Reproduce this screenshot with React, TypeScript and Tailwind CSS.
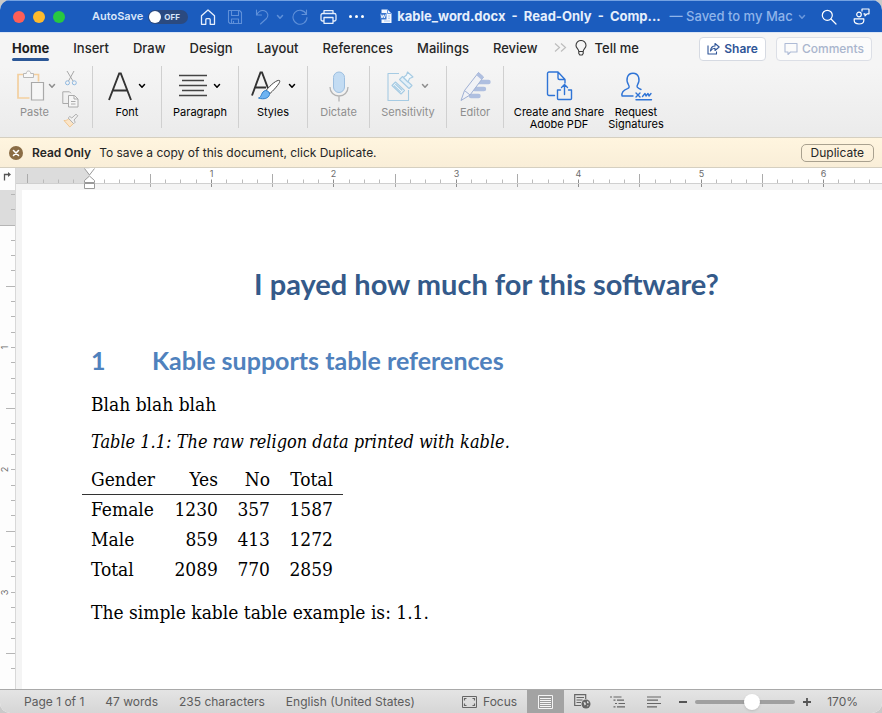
import React, { useEffect, useState } from "react";

type IconProps = { className?: string };

const Chevron = ({ className = "" }: IconProps) => (
  <svg className={`shrink-0 ${className}`} width="8" height="6" viewBox="0 0 8 6" fill="none" stroke="currentColor" strokeWidth="1.5" strokeLinecap="round" strokeLinejoin="round">
    <path d="M1.5 1.5 4 4.2l2.5-2.7" />
  </svg>
);

const HomeIcon = () => (
  <svg width="16" height="16" viewBox="0 0 16 16" fill="none" stroke="currentColor" strokeWidth="1.3" strokeLinejoin="round">
    <path d="M1.5 6.8 8 .9l6.5 5.9v8.5h-4.3v-4.6a1 1 0 0 0-1-1H6.8a1 1 0 0 0-1 1v4.6H1.5z" />
  </svg>
);

const SaveIcon = () => (
  <svg width="16" height="16" viewBox="0 0 16 16" fill="none" stroke="currentColor" strokeWidth="1.1" strokeLinejoin="round">
    <path d="M1.5 1.5h11l2 2v11H3l-1.5-1.5zM4.5 1.5v5h7v-5M4.5 14.5v-4.5h7v4.5M6.5 12v2.5" />
  </svg>
);

const UndoIcon = () => (
  <svg width="15" height="16" viewBox="0 0 15 16" fill="none" stroke="currentColor" strokeWidth="1.1" strokeLinecap="round">
    <path d="M1.500 1v5h5M1.700 5.800C3.500 2.500 6.500.8 9.500 1.800c3.500 1.200 4.300 5.200 2 7.700L5.500 15" />
  </svg>
);

const RedoIcon = () => (
  <svg width="16" height="16" viewBox="0 0 16 16" fill="none" stroke="currentColor" strokeWidth="1.1" strokeLinecap="round">
    <path d="M14.500 1v4.500H10M14.300 5.200A7 7 0 1 0 15 8.500" />
  </svg>
);

const PrintIcon = () => (
  <svg width="17" height="16" viewBox="0 0 17 16" fill="none" stroke="currentColor" strokeWidth="1.3" strokeLinejoin="round">
    <path d="M4 4.500V1.700h9v2.800M4 12H2.500a1.500 1.500 0 0 1-1.500-1.500V6.200a1.700 1.700 0 0 1 1.700-1.700h11.600A1.700 1.700 0 0 1 16 6.200v4.300a1.500 1.500 0 0 1-1.500 1.500H13M4 8.500h9v5.800H4z" />
  </svg>
);

const DocIcon = () => (
  <svg width="12" height="15" viewBox="0 0 12 15">
    <path d="M1.500.5h6L11.500 4.500v9.500h-10z" fill="#f4f8ff" />
    <path d="M7.500.5v4h4" fill="none" stroke="#6d9be0" />
    <path d="M8 7h2M8 9.200h2M4 12h6" stroke="#a9c6f0" />
    <rect y="4" width="6.500" height="6.500" fill="#3a76cf" />
    <path d="m1 5.500 1 3.500 1.200-3.200L4.400 9l1.100-3.500" fill="none" stroke="#fff" strokeWidth=".9" />
  </svg>
);

const SearchIcon = () => (
  <svg width="16" height="16" viewBox="0 0 16 16" fill="none" stroke="currentColor" strokeWidth="1.2" strokeLinecap="round">
    <circle cx="6.3" cy="6.3" r="5" />
    <path d="m10 10 5 5" />
  </svg>
);

const PresenceIcon = () => (
  <svg width="17" height="17" viewBox="0 0 17 17" fill="none" stroke="currentColor" strokeWidth="1.2" strokeLinejoin="round">
    <circle cx="6" cy="6.5" r="2.3" />
    <path d="M1.200 10.800h9.600v1.700c0 2.200-2 3.500-4.800 3.500s-4.800-1.300-4.800-3.500zM9 3.500V1h7v4.800h-2l-2 2V5.800h-1.500" />
  </svg>
);

const BulbIcon = () => (
  <svg width="12" height="16" viewBox="0 0 12 16" fill="none" stroke="#3a3a3a" strokeWidth="1.1" strokeLinejoin="round">
    <path d="M3.800 11.500C3.800 9 1 8.300 1 5.500a5 5 0 0 1 10 0c0 2.800-2.800 3.500-2.800 6zM3.800 11.500v2l1 1.500h2.400l1-1.500v-2" />
  </svg>
);

const ShareIcon = () => (
  <svg width="13" height="13" viewBox="0 0 13 13" fill="none" stroke="#2f5597" strokeWidth="1.1" strokeLinejoin="round">
    <path d="M1 3.500v8.500h8.500V9.500M3.500 9C3.800 5.800 5.500 4 8 4V1.500L12.200 5 8 8.500V6.300C6 6.300 4.700 7.200 3.500 9z" />
  </svg>
);

const CommentIcon = () => (
  <svg width="14" height="14" viewBox="0 0 14 14" fill="none" stroke="#aebbd6" strokeWidth="1.1" strokeLinejoin="round">
    <path d="M1 1.500h12v8.500H6.500L4 12.500V10H1z" />
  </svg>
);

const PasteIcon = () => (
  <svg width="30" height="32" viewBox="0 0 30 32" fill="none">
    <path d="M7.500 4.500H2v23.500h11.500M17 4.500h5.500v7" stroke="#f3cf9f" strokeWidth="1.7" />
    <path d="M7.500 7.500h10v-4h-2.800c0-1.500-.9-2.500-2.200-2.500s-2.200 1-2.200 2.500H7.500z" stroke="#b9b9b9" fill="#f8f8f8" />
    <path d="M15.500 12.500h12V30h-12z" stroke="#a9a9a9" strokeWidth="1.2" fill="#f6f6f6" />
  </svg>
);

const CutIcon = () => (
  <svg width="14" height="16" viewBox="0 0 14 16" fill="none">
    <path d="M3 1l6 10M10 1 4.500 11" stroke="#a8a8a8" />
    <circle cx="3.5" cy="12.8" r="2" stroke="#8fb8e0" />
    <circle cx="10.3" cy="12.8" r="2" stroke="#8fb8e0" />
  </svg>
);

const CopyIcon = () => (
  <svg width="17" height="17" viewBox="0 0 17 17" fill="none" stroke="#aaa">
    <path d="M6 12.500H.8V.8h6.700l1.500 1.500" />
    <path d="M6.500 4.500h6L16 8v8H6.500z" fill="#f6f6f6" />
    <path d="M12 4.500V8h4M9 10.500h4.500M9 13h4.500" />
  </svg>
);

const PainterIcon = () => (
  <svg width="16" height="15" viewBox="0 0 16 15" fill="none" strokeLinejoin="round">
    <path d="M1 7.500c2 .2 3.500-.5 4.700-1.800l4.800 4.800L6.800 14z" fill="#fbe5c8" stroke="#efc691" />
    <path d="m5.200 5 1.600-1.500 2 1.500L13 1.200l1.800 1.600L11 7l1.200 2.200-1.500 1.500z" stroke="#b0b0b0" fill="#f2f2f2" />
  </svg>
);

const FontIcon = () => (
  <svg width="24" height="29" viewBox="0 0 24 29" fill="none" stroke="#333" strokeWidth="1.9">
    <path d="M1 28 11.200 1.500h1.600L23 28M4.800 18.500h14.400" />
  </svg>
);

const ParagraphIcon = () => (
  <svg width="28" height="24" viewBox="0 0 28 24" stroke="#444" strokeWidth="1.3">
    <path d="M0 1.500h28M3 6.500h22M0 11.500h28M3 16.500h22M0 21.500h28" />
  </svg>
);

const StylesIcon = () => (
  <svg width="31" height="30" viewBox="0 0 31 30" fill="none">
    <path d="M1 24.500 9.500 1.500h1.500L18 20M4 16.500h11" stroke="#333" strokeWidth="1.9" />
    <path d="M15 19.500C20 13.500 26 8.500 28.500 9.500c1.500 1-3 7-9.500 13z" fill="#fff" stroke="#444" />
    <path d="M14.500 19.500c2.500 0 4.500 2 4 4-.7 3.500-5.500 5.500-11 3.500 3.500-.8 2.500-6.500 7-7.500z" fill="#6db3f2" stroke="#2f7fc9" />
  </svg>
);

const MicIcon = () => (
  <svg width="20" height="31" viewBox="0 0 20 31" fill="none">
    <path d="M1 16c0 5.500 3.800 9 9 9s9-3.500 9-9M10 25v5.500" stroke="#b3b3b3" strokeWidth="1.3" />
    <rect x="4.5" y="1" width="11" height="20.5" rx="5.5" fill="#c3dcf3" stroke="#9dbfe0" />
  </svg>
);

const SensitivityIcon = () => (
  <svg width="28" height="31" viewBox="0 0 28 31" fill="none" stroke="#a6cbe3" strokeWidth="1.1" strokeLinejoin="round">
    <path d="M12 2.500H1v27h20.500V19" />
    <path d="m5 14.500 3.500-3.500 9 8.500-3.500 3.500z" fill="#f3f8fb" />
    <path d="m6.800 14.500 7 6.700M8.300 13l7 6.500" />
    <path d="m12.500 8.500 3-3 9.500 9-3 3z" fill="#e3f0f8" />
    <path d="m16.500 6.500 3-2.500 1-3 5.500 5-3.500 1.500-1.500 3.500z" fill="#f3f8fb" />
  </svg>
);

const EditorIcon = () => (
  <svg width="31" height="31" viewBox="0 0 31 31" fill="none">
    <path d="M18.500 11H28.500M14.500 18h9.500M11 25h7.500" stroke="#afbfe0" strokeWidth="4.4" strokeLinecap="round" />
    <path d="M18.500 1.500 4.500 19.500 1 29.500l9-5.500L23.500 6z" fill="#f1f2f6" stroke="#9fb0d4" strokeLinejoin="round" />
    <path d="m18.500 1.500 5 4.500-2 2.700-5-4.500z" fill="#afbfe0" />
    <path d="m4.500 19.500 5.500 4.500" stroke="#9fb0d4" />
  </svg>
);

const PdfIcon = () => (
  <svg width="27" height="30" viewBox="0 0 27 30" fill="none" stroke="#2f74d6" strokeWidth="1.4" strokeLinejoin="round" strokeLinecap="round">
    <path d="M8.500 24.500H3A1.500 1.500 0 0 1 1.500 23V2.500A1.500 1.500 0 0 1 3 1h9l7 7.500v3.500M12 1v6a1.500 1.500 0 0 0 1.500 1.500h5.500M14.500 19H11.500v8.500a1 1 0 0 0 1 1h12a1 1 0 0 0 1-1V19h-3M18.500 23.500v-9.500M15.500 16.500l3-3 3 3" />
  </svg>
);

const SignIcon = () => (
  <svg width="33" height="29" viewBox="0 0 33 29" fill="none" stroke="#2f74d6" strokeWidth="1.4" strokeLinejoin="round" strokeLinecap="round">
    <path d="M13 24H2c-.8-4.500 2-6 5.500-7.300 2-.8 2-2.200 1-3.800C5.500 8 7 1.200 13 1.200S20.500 8 17.500 12.900c-1 1.600-.8 3 3.500 4.600M16 21l4 4M20 21l-4 4M22.500 24.500l2.500-3 1 2.500 2-2.500 1 2.500 2-2.500M16 27.800h15.500" />
  </svg>
);

const FocusIcon = () => (
  <svg width="15" height="12" viewBox="0 0 15 12" fill="none" stroke="#666">
    <path d="M.5.5h14v11H.5z" />
    <path d="M2.500 4.500v-2h2M10.500 2.500h2v2M12.500 7.500v2h-2M4.500 9.500h-2v-2" strokeWidth="1.2" />
  </svg>
);

const PrintLayoutIcon = () => (
  <svg width="15" height="14" viewBox="0 0 15 14">
    <path d="M.5.5h14v13H.5z" fill="#9a9a9a" stroke="#f5f5f5" />
    <path d="M2 3.500h11M2 5.500h11M2 7.500h11M2 9.500h11M2 11.500h11" stroke="#f5f5f5" />
  </svg>
);

const WebLayoutIcon = () => (
  <svg width="17" height="15" viewBox="0 0 17 15" fill="none">
    <path d="M7 11.500H.7V.7h11V5M2.500 3.500h7.500M2.500 6h6M2.500 8.500h4.500" stroke="#666" strokeWidth="1.2" />
    <circle cx="12" cy="10" r="4.5" fill="#666" />
    <path d="m9.500 8 2 .5.500 2-1.500 1zM13 7l1.800 1-.5 1.500-1.300-.5zM13 11.500l1.500-.5-.7 1.800z" fill="#ddd" />
  </svg>
);

const OutlineIcon = () => (
  <svg width="16" height="12" viewBox="0 0 16 12" stroke="#666" strokeWidth="1.2">
    <path d="M0 1h2M3.500 1h8M3.500 4.200h2M7 4.200h7M5 7.500h2M8.500 7.500H15M3.500 10.800h2M7 10.800h8" />
  </svg>
);

const DraftIcon = () => (
  <svg width="15" height="12" viewBox="0 0 15 12" stroke="#666" strokeWidth="1.2">
    <path d="M0 1h14M0 4.200h11M0 7.500h14M0 10.800h10" />
  </svg>
);

const INCH = 122.4;
const MARGIN_X = 73.5;
const MARGIN_Y = 35.5;

function useWindowSize() {
  const [size, setSize] = useState({ width: window.innerWidth, height: window.innerHeight });
  useEffect(() => {
    const update = () => setSize({ width: window.innerWidth, height: window.innerHeight });
    window.addEventListener("resize", update);
    return () => window.removeEventListener("resize", update);
  }, []);
  return size;
}

// Eighth-inch tick numbers that fit in a ruler of the given length.
function ticksFor(length: number, margin: number) {
  const first = -Math.floor((margin - 4) / (INCH / 8));
  const last = Math.floor((length - margin - 6) / (INCH / 8));
  return Array.from({ length: Math.max(0, last - first + 1) }, (_, n) => n + first);
}

function HorizontalRuler({ length }: { length: number }) {
  return (
    <div className="h-[22px] min-w-0 flex-1 overflow-hidden bg-[#f4f4f4]">
      <svg width="100%" height="22" className="block" stroke="#ababab">
        <rect width="100%" height="15" fill="#fff" stroke="none" />
        <rect width={MARGIN_X} height="15" fill="#dcdcdc" stroke="none" />
        <path d="M0 15.500H4000" stroke="#d0d0d0" />
        {ticksFor(length, MARGIN_X).map((t) => {
          const x = Math.round(MARGIN_X + (t * INCH) / 8) - 0.5;
          if (t === 0) return null;
          if (t % 8 === 0)
            return (
              <g key={t}>
                <path d={`M${x} 11.500V15M${x} 16v3`} stroke="#8f8f8f" />
                <text x={x} y="9" textAnchor="middle" stroke="none" fill="#6b6b6b" fontSize="9" fontFamily="Inter, sans-serif">
                  {t / 8}
                </text>
              </g>
            );
          if (t % 4 === 0) return <path key={t} d={`M${x} 6V15${t > 0 ? `M${x} 16v3` : ""}`} />;
          return <path key={t} d={`M${x} 11.500V15`} stroke="#bbb" />;
        })}
        <path d="M68.500.5h10L73.500 7z" fill="#fff" stroke="none" />
        <path d="m68.500.5 5 6.500 5-6.500" fill="none" stroke="#999" />
        <path d="M73.500 8l5 4.500v2h-10v-2zM68.500 15.500h10v5h-10z" fill="#fff" stroke="#999" />
      </svg>
    </div>
  );
}

function VerticalRuler({ length }: { length: number }) {
  return (
    <svg className="block h-full w-4 shrink-0 bg-[#fdfdfd]" stroke="#b5b5b5">
      <rect width="15" height={MARGIN_Y} fill="#dcdcdc" stroke="none" />
      <path d="M15.500 0V4000" stroke="#d8d8d8" />
      {ticksFor(length, MARGIN_Y).map((t) => {
        const y = Math.round(MARGIN_Y + (t * INCH) / 8) - 0.5;
        if (t === 0) return <path key={t} d={`M0 ${y}h15`} />;
        return (
          <g key={t}>
            <path d={t % 8 !== 0 && t % 4 === 0 ? `M6 ${y}h9` : `M11 ${y}h4`} />
            {t % 8 === 0 && (
              <text transform={`translate(8 ${y}) rotate(-90)`} textAnchor="middle" stroke="none" fill="#6b6b6b" fontSize="9" fontFamily="Inter, sans-serif">
                {t / 8}
              </text>
            )}
          </g>
        );
      })}
    </svg>
  );
}

function Group({ icon, label, width, menu, muted, last }: { icon: React.ReactNode; label: string; width: string; menu?: boolean; muted?: boolean; last?: boolean }) {
  return (
    <div className={`flex shrink-0 justify-center ${width} ${last ? "h-16" : "h-[62px] border-r border-[#d0d0d0]"}`}>
      <button type="button" className={`flex flex-col items-center text-[11px] leading-3 ${muted ? "text-[#8e8e8e]" : "text-black"}`}>
        <span className="flex h-10 items-center gap-1.5">
          {icon}
          {menu && <Chevron />}
        </span>
        <span className="whitespace-pre text-center">{label}</span>
      </button>
    </div>
  );
}

const tabs = ["Insert", "Draw", "Design", "Layout", "References", "Mailings", "Review"];

const rows = [
  ["Female", 1230, 357, 1587],
  ["Male", 859, 413, 1272],
  ["Total", 2089, 770, 2859],
];

export default function App() {
  const { width, height } = useWindowSize();
  return (
    <div className="h-screen bg-[#c9c9c9] font-['Inter','Liberation_Sans',sans-serif]">
      <div className="flex h-full flex-col overflow-hidden rounded-[10px] bg-white">
        <header className="flex h-8 shrink-0 items-center border-t border-[#74a2e2] bg-[#1b5cbe] pl-[13px] pr-3 text-white">
          <div className="flex gap-2">
            <button type="button" aria-label="Close" className="size-3 rounded-full bg-[#fe5f57]" />
            <button type="button" aria-label="Minimize" className="size-3 rounded-full bg-[#febb2e]" />
            <button type="button" aria-label="Zoom window" className="size-3 rounded-full bg-[#28c840]" />
          </div>
          <label className="ml-[27px] flex items-center gap-[5px] text-[11px] font-semibold text-[#d9e6fa]">
            AutoSave
            <input type="checkbox" role="switch" className="sr-only" />
            <span className="flex h-3.5 w-10 items-center gap-[3px] rounded-full bg-[#2b4a80] pl-px text-[8px] font-bold">
              <span className="size-3 rounded-full bg-white" />
              OFF
            </span>
          </label>
          <div className="ml-3 flex shrink-0 items-center text-[#e6effc]">
            <button type="button" aria-label="Home"><HomeIcon /></button>
            <button type="button" aria-label="Save" className="ml-[11px] text-[#5f90d9]"><SaveIcon /></button>
            <button type="button" aria-label="Undo" className="ml-3 flex items-center gap-1.5 text-[#5f90d9]">
              <UndoIcon />
              <Chevron />
            </button>
            <button type="button" aria-label="Redo" className="ml-2 text-[#5f90d9]"><RedoIcon /></button>
            <button type="button" aria-label="Print" className="ml-3"><PrintIcon /></button>
            <button type="button" aria-label="More" className="ml-3 flex gap-[3px]">
              <span className="size-[3px] rounded-full bg-white" />
              <span className="size-[3px] rounded-full bg-white" />
              <span className="size-[3px] rounded-full bg-white" />
            </button>
          </div>
          <h1 className="ml-4 flex min-w-0 flex-1 items-center gap-[5px] text-[13px]">
            <DocIcon />
            <span className="whitespace-pre font-bold text-[#e6effc]">{"kable_word.docx  -  Read-Only  -  Comp..."}</span>
            <span className="ml-1 whitespace-nowrap font-medium text-[#8fb4ea]">— Saved to my Mac</span>
            <Chevron className="text-[#6b98dc]" />
          </h1>
          <button type="button" aria-label="Search"><SearchIcon /></button>
          <button type="button" aria-label="Presence" className="ml-4"><PresenceIcon /></button>
        </header>

        <nav className="flex h-[34px] shrink-0 items-center border-t border-[#dbe5f5] bg-[#f5f5f5] pb-0.5 pl-3 pr-2.5 text-[13px] font-medium leading-4 text-[#262626]">
          <div className="flex items-center gap-6">
            <button type="button" className="pt-1 font-bold text-[#1d1d1d]">
              Home
              <span className="mt-0.5 block h-[3px] rounded-full bg-[#2b5797]" />
            </button>
            {tabs.map((t) => (
              <button key={t} type="button" className="mb-0.5">{t}</button>
            ))}
          </div>
          <button type="button" aria-label="More tabs" className="mb-0.5 ml-4 text-[#bdbdbd]">
            <svg width="13" height="9" viewBox="0 0 13 9" fill="none" stroke="currentColor" strokeWidth="1.2">
              <path d="m1 .5 4.500 4-4.500 4M7 .5l4.500 4-4.500 4" />
            </svg>
          </button>
          <button type="button" className="mb-0.5 ml-2 flex items-center gap-2">
            <BulbIcon />
            Tell me
          </button>
          <div className="ml-auto flex gap-2.5 text-xs font-semibold">
            <button type="button" className="flex h-6 items-center gap-1 rounded border border-[#d6dae2] bg-white px-[7px] text-[#2f5597]">
              <ShareIcon />
              Share
            </button>
            <button type="button" className="flex h-6 items-center gap-1 rounded border border-[#dcdfe6] bg-[#fbfbfb] px-[7px] font-medium text-[#a9b5cd]">
              <CommentIcon />
              Comments
            </button>
          </div>
        </nav>

        <section aria-label="Ribbon" className="flex h-[71px] shrink-0 bg-linear-to-b from-[#f5f5f5] to-[#ebebeb]">
          <div className="flex h-[62px] w-[93px] shrink-0 gap-1.5 border-r border-[#d0d0d0] pl-4">
            <button type="button" className="flex flex-col items-start text-[11px] leading-3 text-[#8e8e8e]">
              <span className="flex h-10 items-center gap-0.5">
                <PasteIcon />
                <Chevron />
              </span>
              <span className="pl-1">Paste</span>
            </button>
            <div className="flex flex-col items-center justify-between pt-1">
              <button type="button" aria-label="Cut"><CutIcon /></button>
              <button type="button" aria-label="Copy"><CopyIcon /></button>
              <button type="button" aria-label="Format painter"><PainterIcon /></button>
            </div>
          </div>
          <Group icon={<FontIcon />} label="Font" width="w-[69px]" menu />
          <Group icon={<ParagraphIcon />} label="Paragraph" width="w-[77px]" menu />
          <Group icon={<StylesIcon />} label="Styles" width="w-[69px]" menu />
          <Group icon={<MicIcon />} label="Dictate" width="w-[62px]" muted />
          <Group icon={<SensitivityIcon />} label="Sensitivity" width="w-[77px]" menu muted />
          <Group icon={<EditorIcon />} label="Editor" width="w-[57px]" muted />
          <Group icon={<PdfIcon />} label={"Create and Share\nAdobe PDF"} width="w-[110px]" last />
          <Group icon={<SignIcon />} label={"Request\nSignatures"} width="w-11" last />
        </section>

        <section aria-label="Read only notice" className="flex h-[31px] shrink-0 items-center border-y border-[#d5cfc0] bg-linear-to-b from-[#fff5df] to-[#f9eed8] pl-[9px] pr-2 text-xs text-[#262626]">
          <button type="button" aria-label="Dismiss">
            <svg width="14" height="14" viewBox="0 0 14 14">
              <circle cx="7" cy="7" r="7" fill="#8a6c45" />
              <path d="m4.500 4.500 5 5m0-5-5 5" stroke="#fff" strokeWidth="1.6" strokeLinecap="round" />
            </svg>
          </button>
          <strong className="ml-[9px] font-semibold">Read Only</strong>
          <span className="ml-2">To save a copy of this document, click Duplicate.</span>
          <button type="button" className="ml-auto flex h-[18px] items-center rounded-[5px] border border-[#a9a18f] px-[9px]">Duplicate</button>
        </section>

        <div className="flex shrink-0">
          <button type="button" aria-label="Tab stop" className="flex h-[22px] w-4 justify-center border-r border-[#d8d8d8] bg-[#fdfdfd] pt-[3px]">
            <svg width="9" height="10" viewBox="0 0 9 10" fill="none" stroke="#555">
              <path d="M1.500 9.500v-6h4.500" strokeWidth="1.3" />
              <path d="M5 1v5l3-2.500z" fill="#555" stroke="none" />
            </svg>
          </button>
          <HorizontalRuler length={width - 16} />
        </div>

        <div className="flex min-h-0 flex-1 bg-[#f4f4f4]">
          <VerticalRuler length={height - 214} />
          <main className="ml-1.5 min-w-0 flex-1 overflow-hidden bg-white pl-[69px] pt-[76px] font-['DejaVu_Serif_Condensed','DejaVu_Serif',serif] text-[19px] leading-7 text-black">
            <h1 className="text-center font-['Lato','Carlito',sans-serif] text-[29px] font-bold leading-9 text-[#345a8a]">I payed how much for this software?</h1>
            <h2 className="mt-10 flex font-['Lato','Carlito',sans-serif] text-[25px] font-bold leading-9 text-[#4f81bd]">
              <span className="w-[61px]">1</span>
              Kable supports table references
            </h2>
            <p className="mt-3">Blah blah blah</p>
            <p id="table-caption" className="mt-2.5 text-[18px] italic">Table 1.1: The raw religon data printed with kable.</p>
            <table aria-labelledby="table-caption" className="ml-[-9px] mt-2 border-collapse text-right">
              <thead>
                <tr className="h-[30px] border-b border-[#333]">
                  <th scope="col" className="w-[81px] pl-[9px] text-left font-normal">Gender</th>
                  <th scope="col" className="w-[64px] pr-[9px] font-normal">Yes</th>
                  <th scope="col" className="w-[52px] pr-[9px] font-normal">No</th>
                  <th scope="col" className="w-[64px] pr-[10px] font-normal">Total</th>
                </tr>
              </thead>
              <tbody>
                {rows.map((r) => (
                  <tr key={r[0]} className="h-[30px]">
                    <th scope="row" className="pl-[9px] text-left font-normal">{r[0]}</th>
                    <td className="pr-[9px]">{r[1]}</td>
                    <td className="pr-[9px]">{r[2]}</td>
                    <td className="pr-[10px]">{r[3]}</td>
                  </tr>
                ))}
              </tbody>
            </table>
            <p className="mt-3.5">The simple kable table example is: 1.1.</p>
          </main>
        </div>

        <footer className="flex h-6 shrink-0 items-center border-t border-[#a9a9a9] bg-linear-to-b from-[#e4e4e4] to-[#d6d6d6] pl-6 pr-6 text-xs text-[#5c5c5c]">
          <div className="flex gap-[21px] whitespace-nowrap">
            <span>Page 1 of 1</span>
            <span>47 words</span>
            <span>235 characters</span>
            <span>English (United States)</span>
          </div>
          <div className="ml-auto flex h-full items-center">
            <button type="button" className="mr-2.5 flex items-center gap-1.5">
              <FocusIcon />
              Focus
            </button>
            <button type="button" aria-label="Print layout" className="flex h-full w-[37px] items-center justify-center bg-[#a3a3a3]"><PrintLayoutIcon /></button>
            <button type="button" aria-label="Web layout" className="flex w-9 justify-center"><WebLayoutIcon /></button>
            <button type="button" aria-label="Outline" className="flex w-9 justify-center"><OutlineIcon /></button>
            <button type="button" aria-label="Draft" className="flex w-9 justify-center"><DraftIcon /></button>
            <button type="button" aria-label="Zoom out" className="ml-[7px] h-0.5 w-2 bg-[#555]" />
            <input
              type="range"
              aria-label="Zoom"
              min={0}
              max={100}
              defaultValue={58}
              className="mx-2 h-1 w-[100px] appearance-none rounded-full bg-[#a0a0a0] [&::-webkit-slider-thumb]:size-4 [&::-webkit-slider-thumb]:appearance-none [&::-webkit-slider-thumb]:rounded-full [&::-webkit-slider-thumb]:bg-white [&::-webkit-slider-thumb]:shadow"
            />
            <button type="button" aria-label="Zoom in">
              <svg width="8" height="8" viewBox="0 0 8 8" stroke="#555" strokeWidth="1.8">
                <path d="M0 4h8M4 0v8" />
              </svg>
            </button>
            <span className="ml-4">170%</span>
          </div>
        </footer>
      </div>
    </div>
  );
}
